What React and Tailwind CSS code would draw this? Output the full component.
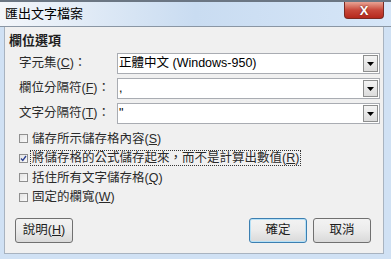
import React from "react";

const font = {
  fontFamily: '"Liberation Sans", "Noto Sans CJK TC", sans-serif',
};

function Key({ children }) {
  return <span className="underline underline-offset-[1px]">{children}</span>;
}

function Select({ value }) {
  return (
    <div className="flex h-[21px] flex-1 items-center border border-[#a9acb2] bg-white">
      <span className="flex-1 pl-[1px] text-[12.5px] leading-none text-black">{value}</span>
      <div className="mr-[1px] flex h-[17px] w-[15px] items-center justify-center border border-[#8e8f8f] bg-gradient-to-b from-[#f4f4f4] to-[#dcdcdc]">
        <svg width="7" height="4" viewBox="0 0 7 4">
          <path d="M0 0 L7 0 L3.5 4 Z" fill="#000" />
        </svg>
      </div>
    </div>
  );
}

function Row({ label, value }) {
  return (
    <div className="flex items-center">
      <div className="w-[98px] text-[12.5px] text-[#2a2a2a]">{label}</div>
      <Select value={value} />
    </div>
  );
}

function Check({ checked, focus, children }) {
  return (
    <div className="flex h-[19.5px] items-center">
      <div className="flex h-[9px] w-[9px] items-center justify-center border border-[#8f8f8f] bg-gradient-to-br from-[#e4e4e4] to-[#fafafa]">
        {checked && (
          <svg width="7" height="7" viewBox="0 0 7 7">
            <path d="M1 3.5 L2.8 5.5 L6 1" stroke="#2a3f8f" strokeWidth="1.3" fill="none" />
          </svg>
        )}
      </div>
      <span
        className={`ml-[2px] px-[1px] text-[12.5px] leading-[14px] text-[#2a2a2a] ${
          focus ? "border border-dotted border-[#333]" : "border border-transparent"
        }`}
      >
        {children}
      </span>
    </div>
  );
}

function Button({ children, primary }) {
  return (
    <button
      className={`flex h-[25px] w-[58px] items-center justify-center rounded-[3px] border bg-gradient-to-b from-[#f3f3f3] via-[#ebebeb] to-[#d9d9d9] text-[12.5px] text-[#1e1e1e] ${
        primary ? "border-[#3c7fb1] shadow-[inset_0_0_0_1px_#b6e1f7]" : "border-[#707070]"
      }`}
    >
      {children}
    </button>
  );
}

export default function App() {
  return (
    <div
      className="flex h-[259px] w-[391px] flex-col overflow-hidden bg-[#d0e1f4]"
      style={font}
    >
      <div className="relative flex h-[27px] items-center border-t-2 border-b border-t-[#6b7683] border-b-[#8a96a4] bg-gradient-to-r from-[#f3f6fa] via-[#c9dcf1] to-[#d6e6f8] pl-[5px]">
        <span className="text-[13px] text-black">匯出文字檔案</span>
        <div className="absolute right-[7px] top-0 flex h-[17px] w-[40px] items-center justify-center rounded-b-[4px] border border-t-0 border-[#7a2a22] bg-gradient-to-b from-[#e8a394] via-[#c8483b] to-[#b5281c]">
          <span className="text-[13px] font-bold leading-none text-white [text-shadow:0_0_2px_#5a1a12]">X</span>
        </div>
      </div>
      <div className="ml-[4px] mr-[7px] flex h-[227px] flex-col border-x border-b border-[#a8b3c0] bg-[#f0f0f0]">
        <div className="pl-[4px] pt-[6px] text-[13px] font-bold leading-[16px] text-[#1e1e1e]">
          欄位選項
        </div>
        <div className="mt-[4px] flex flex-col gap-[4px] pl-[14px] pr-[3px]">
          <Row label={<>字元集(<Key>C</Key>)：</>} value="正體中文 (Windows-950)" />
          <Row label={<>欄位分隔符(<Key>F</Key>)：</>} value="," />
          <Row label={<>文字分隔符(<Key>T</Key>)：</>} value={'"'} />
        </div>
        <div className="mt-[5px] flex flex-col pl-[14px]">
          <Check>
            儲存所示儲存格內容(<Key>S</Key>)
          </Check>
          <Check checked focus>
            將儲存格的公式儲存起來，而不是計算出數值(<Key>R</Key>)
          </Check>
          <Check>
            括住所有文字儲存格(<Key>Q</Key>)
          </Check>
          <Check>
            固定的欄寬(<Key>W</Key>)
          </Check>
        </div>
        <div className="mt-auto mb-[10px] flex items-center pl-[10px] pr-[12px]">
          <Button>
            說明(<Key>H</Key>)
          </Button>
          <div className="flex-1" />
          <div className="flex gap-[6px]">
            <Button primary>確定</Button>
            <Button>取消</Button>
          </div>
        </div>
      </div>
    </div>
  );
}
